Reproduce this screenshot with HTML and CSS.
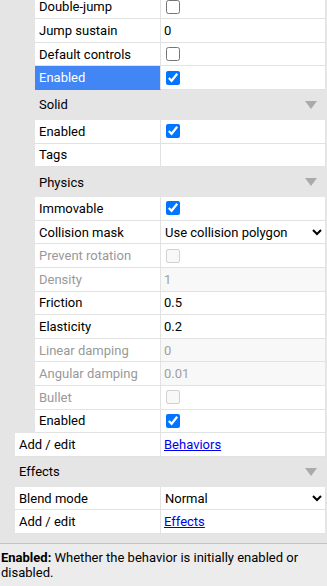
FILE: index.html
```html
<!DOCTYPE html>
<html lang="en">
<head>
  <title>Properties</title>
  <link rel="stylesheet" href="styles.css">
</head>
<body>
  <div class="panel">
    <div class="props">
      <div class="list">
        <div class="row sub">
          <div class="label">Double-jump</div>
          <div class="value"><input type="checkbox"></div>
        </div>
        <div class="row sub">
          <div class="label">Jump sustain</div>
          <div class="value"><input type="text" value="0"></div>
        </div>
        <div class="row sub">
          <div class="label">Default controls</div>
          <div class="value"><input type="checkbox"></div>
        </div>
        <div class="row sub">
          <div class="label selected">Enabled</div>
          <div class="value"><input type="checkbox" checked></div>
        </div>

        <div class="group sub"><span>Solid</span><span class="arrow"></span></div>
        <div class="row sub">
          <div class="label">Enabled</div>
          <div class="value"><input type="checkbox" checked></div>
        </div>
        <div class="row sub">
          <div class="label">Tags</div>
          <div class="value"><input type="text" value=""></div>
        </div>

        <div class="group sub"><span>Physics</span><span class="arrow"></span></div>
        <div class="row sub">
          <div class="label">Immovable</div>
          <div class="value"><input type="checkbox" checked></div>
        </div>
        <div class="row sub">
          <div class="label">Collision mask</div>
          <div class="value">
            <select>
              <option>Use collision polygon</option>
              <option>Bounding box</option>
              <option>Circle</option>
            </select>
          </div>
        </div>
        <div class="row sub disabled">
          <div class="label">Prevent rotation</div>
          <div class="value"><input type="checkbox" disabled></div>
        </div>
        <div class="row sub disabled">
          <div class="label">Density</div>
          <div class="value"><input type="text" value="1" disabled></div>
        </div>
        <div class="row sub">
          <div class="label">Friction</div>
          <div class="value"><input type="text" value="0.5"></div>
        </div>
        <div class="row sub">
          <div class="label">Elasticity</div>
          <div class="value"><input type="text" value="0.2"></div>
        </div>
        <div class="row sub disabled">
          <div class="label">Linear damping</div>
          <div class="value"><input type="text" value="0" disabled></div>
        </div>
        <div class="row sub disabled">
          <div class="label">Angular damping</div>
          <div class="value"><input type="text" value="0.01" disabled></div>
        </div>
        <div class="row sub disabled">
          <div class="label">Bullet</div>
          <div class="value"><input type="checkbox" disabled></div>
        </div>
        <div class="row sub">
          <div class="label">Enabled</div>
          <div class="value"><input type="checkbox" checked></div>
        </div>
        <div class="row">
          <div class="label">Add / edit</div>
          <div class="value"><a href="#">Behaviors</a></div>
        </div>

        <div class="group"><span>Effects</span><span class="arrow"></span></div>
        <div class="row">
          <div class="label">Blend mode</div>
          <div class="value">
            <select>
              <option>Normal</option>
              <option>Additive</option>
              <option>XOR</option>
            </select>
          </div>
        </div>
        <div class="row">
          <div class="label">Add / edit</div>
          <div class="value"><a href="#">Effects</a></div>
        </div>

        <!-- next group is scrolled under the status bar -->
        <div class="group"><span></span><span class="arrow"></span></div>
      </div>
    </div>

    <div class="status"><b>Enabled:</b> Whether the behavior is initially enabled or disabled.</div>
  </div>
</body>
</html>
```

FILE: styles.css
```css
* {
  box-sizing: border-box;
}

body {
  margin: 0;
  font-family: Roboto, 'Liberation Sans', sans-serif;
  font-size: 13px;
  color: #000;
  background: #e5e5e5;
}

.panel {
  width: 327px;
  height: 586px;
  display: flex;
  flex-direction: column;
  overflow: hidden;
}

.props {
  height: 543px;
  overflow: hidden;
  flex-shrink: 0;
}

.list {
  width: 325px;
  margin-top: -4.4px;
}

.row {
  display: flex;
  height: 23.6px;
  padding-left: 15px;
}

.row.sub {
  padding-left: 35px;
}

.label {
  flex: 1;
  display: flex;
  align-items: center;
  padding-left: 4px;
  background: #fff;
  border-right: 1px solid #e2e2e2;
  border-bottom: 1px solid #e2e2e2;
  white-space: nowrap;
}

.label.selected {
  background: #4285f4;
  color: #fff;
  border-bottom-color: #4285f4;
}

.value {
  width: 164px;
  display: flex;
  align-items: center;
  background: #fff;
  border-bottom: 1px solid #e2e2e2;
}

.value input[type="checkbox"] {
  margin: 0 0 0 5px;
  width: 14px;
  height: 14px;
}

.value input[type="text"] {
  width: 100%;
  height: 100%;
  border: none;
  outline: none;
  padding: 0 3px;
  font: inherit;
  color: #000;
  background: transparent;
}

.value select {
  width: 100%;
  height: 100%;
  border: none;
  outline: none;
  padding: 0;
  font: inherit;
  color: #000;
  background: #fff;
}

.value a {
  padding-left: 3px;
  color: #0000ee;
}

.row.disabled .label {
  color: #999;
}

.row.disabled .value input[type="text"] {
  background: #f8f8f8;
  color: #a0a0a0;
}

.group {
  height: 30px;
  display: flex;
  align-items: center;
  justify-content: space-between;
  padding: 0 8px 0 19px;
}

.group.sub {
  padding-left: 39px;
}

.arrow {
  width: 0;
  height: 0;
  border-left: 6px solid transparent;
  border-right: 6px solid transparent;
  border-top: 8px solid #aaa;
}

.status {
  flex: 1;
  border-top: 1px solid #c4c4c4;
  background: #ececec;
  padding: 6px 1px 0;
  line-height: 15px;
}
```
